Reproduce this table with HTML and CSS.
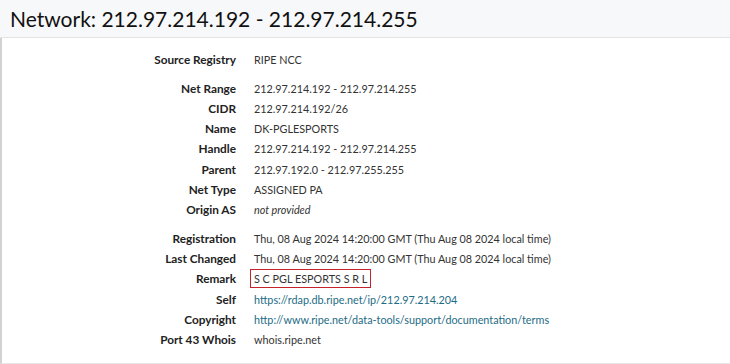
FILE: index.html
```html
<!DOCTYPE html>
<html lang="en">
<head>
<meta charset="utf-8">
<title>Network: 212.97.214.192 - 212.97.214.255</title>
<link rel="stylesheet" href="styles.css">
</head>
<body>
<div class="card">
  <div class="card-header">
    <h1 class="title">Network: 212.97.214.192 - 212.97.214.255</h1>
  </div>
  <div class="card-body">
    <div class="group">
      <div class="row"><div class="label">Source Registry</div><div class="value">RIPE NCC</div></div>
    </div>
    <div class="group">
      <div class="row"><div class="label">Net Range</div><div class="value">212.97.214.192 - 212.97.214.255</div></div>
      <div class="row"><div class="label">CIDR</div><div class="value">212.97.214.192/26</div></div>
      <div class="row"><div class="label">Name</div><div class="value">DK-PGLESPORTS</div></div>
      <div class="row"><div class="label">Handle</div><div class="value">212.97.214.192 - 212.97.214.255</div></div>
      <div class="row"><div class="label">Parent</div><div class="value">212.97.192.0 - 212.97.255.255</div></div>
      <div class="row"><div class="label">Net Type</div><div class="value">ASSIGNED PA</div></div>
      <div class="row"><div class="label">Origin AS</div><div class="value"><em>not provided</em></div></div>
    </div>
    <div class="group">
      <div class="row"><div class="label">Registration</div><div class="value">Thu, 08 Aug 2024 14:20:00 GMT (Thu Aug 08 2024 local time)</div></div>
      <div class="row"><div class="label">Last Changed</div><div class="value">Thu, 08 Aug 2024 14:20:00 GMT (Thu Aug 08 2024 local time)</div></div>
      <div class="row"><div class="label">Remark</div><div class="value"><span class="highlight">S C PGL ESPORTS S R L</span></div></div>
      <div class="row"><div class="label">Self</div><div class="value"><a href="#">https://rdap.db.ripe.net/ip/212.97.214.204</a></div></div>
      <div class="row"><div class="label">Copyright</div><div class="value"><a href="#">http://www.ripe.net/data-tools/support/documentation/terms</a></div></div>
      <div class="row"><div class="label">Port 43 Whois</div><div class="value">whois.ripe.net</div></div>
    </div>
  </div>
</div>
</body>
</html>
```
FILE: styles.css
```css
html, body {
  margin: 0;
  padding: 0;
  background: #fff;
}
body {
  font-family: Lato, "Open Sans", sans-serif;
  color: #333;
}
.card {
  height: 364px;
  box-sizing: border-box;
  overflow: hidden;
}
.card-header {
  height: 38px;
  box-sizing: border-box;
  background: #f7f8f9;
  border-bottom: 1px solid #e2e3e5;
  padding: 0 10px;
  display: flex;
  align-items: center;
}
.title {
  margin: 0;
  font-size: 21px;
  font-weight: 400;
  color: #111;
  line-height: 1;
}
.card-body {
  height: 326px;
  box-sizing: border-box;
  border-left: 2px solid #d2d2d2;
  border-bottom: 1px solid #e6e6e6;
  padding-top: 11px;
  display: flex;
  flex-direction: column;
  gap: 9px;
}
.row {
  display: flex;
  align-items: center;
  height: 20.2px;
  gap: 18px;
}
.label {
  flex: 0 0 234px;
  text-align: right;
  font-weight: 700;
  color: #222;
  font-size: 11.8px;
}
.value {
  font-size: 10.8px;
  color: #333;
  white-space: nowrap;
}
.value em {
  font-style: italic;
}
.highlight {
  display: inline-block;
  margin-left: -4px;
  padding: 2px 3px 2px 3px;
  border: 1.5px solid #c4232c;
}
.value a {
  color: #1d6b85;
  text-decoration: none;
}
```
